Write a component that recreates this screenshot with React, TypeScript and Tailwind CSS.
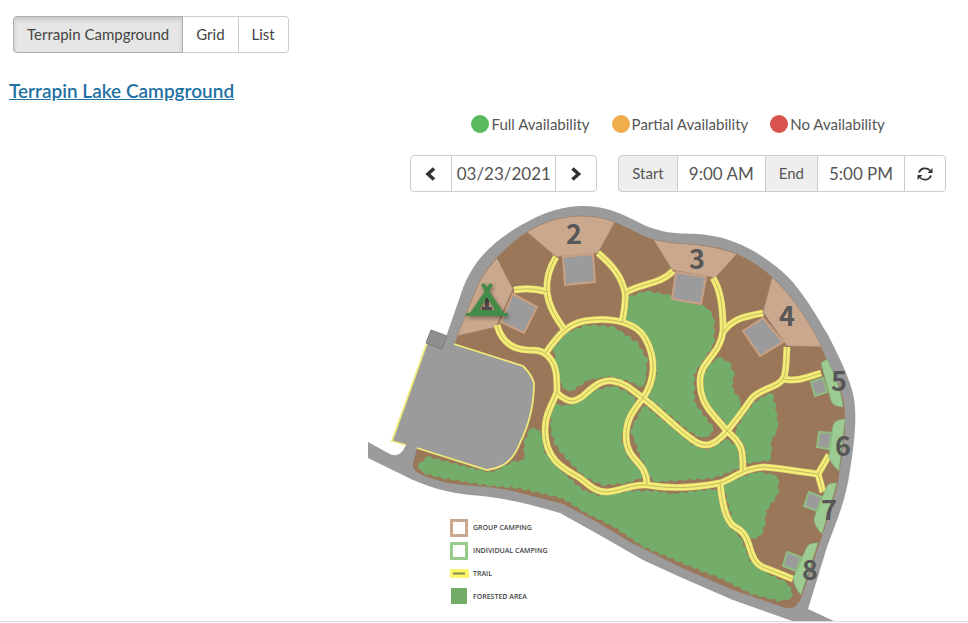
import React from 'react';
import { clsx } from 'clsx';

const views = ['Terrapin Campground', 'Grid', 'List'];

const availability = [
  { label: 'Full Availability', dot: 'bg-[#5cb85c]' },
  { label: 'Partial Availability', dot: 'bg-[#f0ad4e]' },
  { label: 'No Availability', dot: 'bg-[#d9534f]' },
];

const forests = [
  'M557 349 L568 336 L587 328 L613 330 L635 345 L644 360 L642 384 L630 378 L610 373 L587 377 L569 389 L562 380Z',
  'M558 408 L570 409 L597 393 L613 389 L628 396 L635 404 L622 420 L618 440 L625 458 L640 475 L627 480 L603 482 L586 474 L570 458 L558 443 L554 430 L554 414Z',
  'M645 410 L670 430 L690 447 L707 454 L727 443 L735 449 L736 466 L713 475 L680 477 L655 479 L644 457 L634 430Z',
  'M632 299 L647 294 L667 298 L705 310 L711 319 L711 343 L691 373 L691 403 L711 430 L703 435 L693 430 L650 395 L660 377 L659 360 L650 338 L629 320Z',
  'M720 361 L727 365 L731 375 L728 388 L738 402 L735 415 L728 421 L707 397 L705 380 L712 366Z',
  'M770 397 L773 410 L775 427 L768 440 L768 457 L750 460 L747 443 L738 432 L749 413 L760 402Z',
  'M727 486 L757 475 L775 478 L775 493 L763 510 L761 529 L755 536 L737 525 L732 505Z',
  'M422 466 L428 460 L443 464 L470 471 L493 476 L513 465 L528 463 L527 443 L533 430 L540 437 L541 453 L557 471 L580 492 L600 499 L633 494 L653 494 L673 497 L715 492 L718 507 L725 527 L738 539 L748 564 L773 580 L785 585 L790 595 L780 598 L753 591 L723 576 L678 558 L643 543 L617 525 L587 510 L563 495 L520 485 L493 483 L443 475 L424 470Z',
];

const trails = [
  'M514 290 C526 288 538 289 547 292',
  'M556 257 C548 270 546 280 547 292 C549 309 558 320 564 329',
  'M598 253 C611 264 622 276 625 293 C626 304 623 315 622 323',
  'M625 293 C640 283 660 285 673 271',
  'M497 325 C501 340 510 349 527 350 C536 350 542 350 548 356 C557 365 557 377 557 392 C551 407 545 415 545 430 C545 462 567 470 580 478 C590 486 596 492 607 492 C622 491 630 484 647 485 C675 490 699 487 720 483 C735 478 741 469 763 467 C781 468 800 472 818 474 L829 455',
  'M818 474 L823 492',
  'M545 354 C560 332 571 321 592 320 C617 318 637 324 645 338 C657 359 655 381 643 398 C632 412 626 420 626 437 C627 462 646 460 647 484',
  'M557 393 C570 405 576 401 583 396 C597 383 603 380 613 381 C626 383 633 391 643 398 C660 411 677 429 693 440 C706 450 716 444 727 431 C735 422 744 409 752 398 C763 387 779 388 784 377 C787 367 786 357 787 347',
  'M783 379 C797 382 808 377 821 373',
  'M713 278 C722 292 723 312 723 330 C721 354 701 361 700 379 C699 405 713 413 727 431 C743 444 743 451 743 471',
  'M763 313 C742 317 733 319 723 332',
  'M720 483 C722 501 725 521 735 527 C756 537 744 563 768 569 L793 579',
];

const groupSites = [
  'M497 258 L513 289 L496 327 L457 336 L477 287 C482 276 488 268 497 258Z',
  'M527 232 C555 214 589 212 615 222 L598 253 L556 257Z',
  'M653 239 C673 246 704 241 737 254 L715 278 L672 270Z',
  'M772 277 L763 312 L787 346 L822 347 C812 327 795 298 772 277Z',
];

const individualSites = [
  'M821 363 L827 359 C836 377 841 390 843 407 C833 406 832 404 830 397Z',
  'M845 419 C834 420 833 423 832 432 L829 456 C830 463 834 466 839 471Z',
  'M837 483 C829 483 828 484 826 488 L814 518 C814 525 818 529 822 534Z',
  'M818 543 C808 543 808 545 805 551 L793 578 C794 586 797 590 801 595Z',
];

const groupPads = [
  '513,294 537,307 524,333 501,322',
  '563,257 593,254 595,282 565,285',
  '676,272 706,277 701,304 672,299',
  '763,318 783,342 760,356 743,331',
];

const individualPads = [
  '811,382 823,378 827,392 815,396',
  '819,432 832,433 829,449 817,447',
  '809,492 822,497 817,511 804,506',
  '787,552 801,557 796,571 783,566',
];

const siteNumbers = [
  { n: '2', x: 574, y: 244 },
  { n: '3', x: 697, y: 269 },
  { n: '4', x: 787, y: 326 },
  { n: '5', x: 839, y: 391 },
  { n: '6', x: 843, y: 456 },
  { n: '7', x: 829, y: 520 },
  { n: '8', x: 810, y: 580 },
];

const CampgroundMap: React.FC = () => (
  <svg viewBox="368 204 490 417" className="block w-full" role="img" aria-label="Terrapin Lake Campground map">
    {/* Road */}
    <path
      fill="#9b9b9b"
      d="M446 337 L463 288 C476 254 502 235 527 222 C550 209 570 206 583 206 C605 206 621 213 640 223 C667 237 690 232 707 235 C738 239 764 255 787 276 C803 292 816 315 828 335 C838 355 847 372 852 390 C858 409 855 440 850 470 C846 501 835 525 827 547 L808 609 L836 622 L795 622 L733 600 L680 577 L643 560 L603 537 L560 513 C530 504 500 497 470 495 C439 491 428 486 413 480 L368 458 L368 442 L388 453 C399 459 403 451 406 445 L427 343Z"
    />
    {/* Ground */}
    <path
      fill="#9b775a"
      d="M454 345 L477 287 C486 266 506 246 527 232 C555 214 589 212 615 222 L640 234 C667 249 704 239 737 254 C752 261 761 267 772 277 C795 298 812 327 827 360 C839 382 845 395 845 420 C845 443 840 465 838 483 C833 503 828 519 823 533 L803 593 C798 607 794 611 780 606 L733 590 L680 567 L660 557 L630 542 L597 522 L563 504 L520 493 C500 486 455 486 440 481 C426 477 411 472 413 464 L417 448 L440 400Z"
    />
    {/* Parking */}
    <path
      fill="#9b9b9b"
      d="M427 343 L454 344 L523 366 L534 383 C534 407 529 425 520 443 C513 461 503 468 487 470 L417 448 L406 445 L392 441Z"
    />
    <path
      fill="none"
      stroke="#f0ea78"
      strokeWidth="1.8"
      d="M427 343 L392 441 L406 445 M417 448 L487 470 C503 468 513 461 520 443 C529 425 534 407 534 383 C532 376 528 371 523 366 L454 344"
    />
    <path fill="#8f8f8f" stroke="#7b7b7b" d="M431 330 L447 336 L442 349 L426 343Z" />

    {/* Forests, with a dotted round stroke for the leafy edge */}
    {forests.map((d) => (
      <g key={d} fill="#74ac6a" stroke="#74ac6a" strokeLinejoin="round" strokeLinecap="round">
        <path d={d} strokeWidth="5" />
        <path d={d} fill="none" strokeWidth="8" strokeDasharray="0 9" />
      </g>
    ))}

    <g fill="#c9a88d" stroke="#947b69" strokeWidth="0.6">
      {groupSites.map((d) => <path key={d} d={d} />)}
    </g>

    <g fill="none" strokeLinejoin="round">
      {trails.map((d) => <path key={d} d={d} stroke="#cdbd6a" strokeWidth="7" />)}
      {trails.map((d) => <path key={d} d={d} stroke="#f4ee78" strokeWidth="6" />)}
      {trails.map((d) => <path key={d} d={d} stroke="#c2b95f" strokeWidth="1" />)}
    </g>

    <g fill="#9ccc91" stroke="#7fa877" strokeWidth="0.6">
      {individualSites.map((d) => <path key={d} d={d} />)}
    </g>
    <g fill="#9b9b9b" stroke="#c9a083" strokeWidth="2">
      {groupPads.map((p) => <polygon key={p} points={p} />)}
    </g>
    <g fill="#9b9b9b" stroke="#8fbd80" strokeWidth="2">
      {individualPads.map((p) => <polygon key={p} points={p} />)}
    </g>

    <g fill="#575757" className="font-['Noto_Sans_CJK_SC',sans-serif] text-[27px] font-bold" textAnchor="middle">
      {siteNumbers.map((s) => <text key={s.n} x={s.x} y={s.y}>{s.n}</text>)}
    </g>

    {/* Tent marker on site 1 */}
    <path fill="#5a4f50" d="M485 298 H489 V307 H492 V310 H482 V307 H485Z" />
    <g className="drop-shadow-[1px_2px_2px_rgba(0,0,0,0.4)]">
      <path
        fill="#438c47"
        fillRule="evenodd"
        d="M481 285 L484 283 L487 287 L490 283 L493 285 L489 291 L504 313 L508 313 L508 316 L466 316 L466 313 L470 313 L485 291Z M487 297 L479 310 L495 310Z"
      />
    </g>

    {/* Key */}
    <rect x="451.500" y="520.500" width="15" height="15" fill="#fff" stroke="#c9a88d" strokeWidth="3" />
    <rect x="451.500" y="543.500" width="15" height="15" fill="#fff" stroke="#97cc8c" strokeWidth="3" />
    <rect x="450" y="569" width="19" height="9" fill="#fbf66d" />
    <path d="M453 573.500 H465" stroke="#8b8745" strokeWidth="2" />
    <rect x="451" y="588" width="16" height="16" fill="#74ac6a" />
    <g fill="#444" className="font-['Open_Sans',sans-serif] text-[7px] font-semibold">
      <text x="473" y="530">GROUP CAMPING</text>
      <text x="473" y="553">INDIVIDUAL CAMPING</text>
      <text x="473" y="576">TRAIL</text>
      <text x="473" y="599">FORESTED AREA</text>
    </g>
  </svg>
);

const iconButton = 'flex w-[42px] items-center justify-center border border-[#ccc] bg-white text-[#333]';
const field = 'border-y border-[#ccc] bg-white text-center text-[17px] text-[#555] outline-none';
const addon = 'flex items-center border border-[#ccc] bg-[#eee] text-[15px] text-[#555]';

export default function App() {
  return (
    <main className="border-b border-[#ddd] bg-white font-['Lato',sans-serif] text-[#555]">
      <div className="flex px-[13px] pt-4">
        {views.map((view, i) => (
          <button
            key={view}
            type="button"
            aria-pressed={i === 0}
            className={clsx(
              'h-[37px] border px-[13px] text-[15px] text-[#444]',
              i === 0 ? 'rounded-l border-[#adadad] bg-[#e6e6e6] shadow-[inset_0_3px_5px_rgba(0,0,0,0.125)]' : 'border-l-0 border-[#ccc] bg-white',
              i === views.length - 1 && 'rounded-r'
            )}
          >
            {view}
          </button>
        ))}
      </div>

      <h1 className="px-[9px] pt-[26px] text-[19px] leading-6 font-semibold">
        <a href="#campground" className="text-[#1f70a3] underline">Terrapin Lake Campground</a>
      </h1>

      <div className="flex flex-col items-end pr-[22px] pt-[11px]">
        <div className="flex flex-col items-center">
          <ul className="flex gap-[22px] text-[15px] leading-5">
            {availability.map(({ label, dot }) => (
              <li key={label} className="flex items-center gap-[2px]">
                <span className={clsx('size-[18px] rounded-full', dot)} />
                {label}
              </li>
            ))}
          </ul>

          <div className="mt-[21px] flex gap-[21px]">
            <div className="flex h-[37px]">
              <button type="button" aria-label="Previous day" className={clsx(iconButton, 'rounded-l')}>
                <svg viewBox="0 0 14 14" className="size-[14px]" fill="none" stroke="currentColor" strokeWidth="3.600">
                  <path d="M10 1.500 L4 7 L10 12.500" />
                </svg>
              </button>
              <input aria-label="Date" defaultValue="03/23/2021" className={clsx(field, 'w-[103px]')} />
              <button type="button" aria-label="Next day" className={clsx(iconButton, 'rounded-r')}>
                <svg viewBox="0 0 14 14" className="size-[14px]" fill="none" stroke="currentColor" strokeWidth="3.600">
                  <path d="M3.500 1.500 L9.500 7 L3.500 12.500" />
                </svg>
              </button>
            </div>

            <div className="flex h-[37px]">
              <label htmlFor="start" className={clsx(addon, 'rounded-l px-[13px]')}>Start</label>
              <input id="start" defaultValue="9:00 AM" className={clsx(field, 'w-[87px]')} />
              <label htmlFor="end" className={clsx(addon, 'px-[13px]')}>End</label>
              <input id="end" defaultValue="5:00 PM" className={clsx(field, 'w-[86px]')} />
              <button type="button" aria-label="Refresh" className={clsx(iconButton, 'rounded-r')}>
                <svg viewBox="0 0 16 16" className="size-4" fill="none" stroke="currentColor" strokeWidth="1.800">
                  <path d="M2 6.500 C3.500 2 9.500 0.800 13 4.500 M14 9.500 C12.500 14 6.500 15.200 3 11.500" />
                  <path fill="currentColor" stroke="none" d="M15.500 2 V7 H10.500Z M0.500 14 V9 H5.500Z" />
                </svg>
              </button>
            </div>
          </div>
        </div>
      </div>

      <div className="mt-3 pr-[110px]">
        <div className="ml-auto max-w-[490px]">
          <CampgroundMap />
        </div>
      </div>
    </main>
  );
}
